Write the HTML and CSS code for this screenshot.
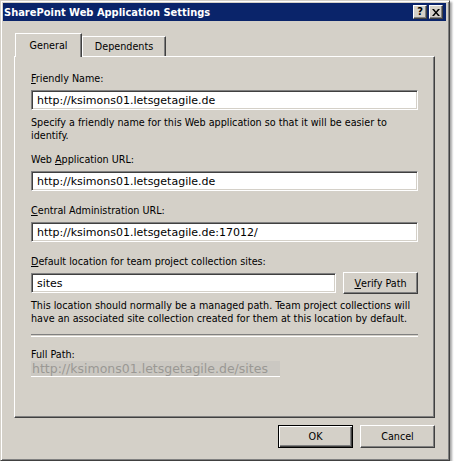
FILE: index.html
```html
<!DOCTYPE html>
<html>
<head>
<meta charset="utf-8">
<link rel="stylesheet" href="styles.css">
</head>
<body>
<div class="window">
  <div class="titlebar">
    <span class="title">SharePoint Web Application Settings</span>
    <div class="tbtns">
      <span class="tbtn">?</span>
      <span class="tbtn x">
        <svg width="8" height="7" viewBox="0 0 8 7"><path d="M0 0h2l2 2.5L6 0h2L5 3.5 8 7H6L4 4.5 2 7H0l3-3.5z" fill="#000"/></svg>
      </span>
    </div>
  </div>
  <div class="body">
    <div class="tabs">
      <div class="tab active">General</div>
      <div class="tab">Dependents</div>
    </div>
    <div class="panel">
      <div class="label"><u>F</u>riendly Name:</div>
      <div class="input">http://ksimons01.letsgetagile.de</div>
      <div class="help">Specify a friendly name for this Web application so that it will be easier to identify.</div>
      <div class="label">Web <u>A</u>pplication URL:</div>
      <div class="input">http://ksimons01.letsgetagile.de</div>
      <div class="label"><u>C</u>entral Administration URL:</div>
      <div class="input">http://ksimons01.letsgetagile.de:17012/</div>
      <div class="label"><u>D</u>efault location for team project collection sites:</div>
      <div class="row">
        <div class="input grow">sites</div>
        <div class="button verify"><u>V</u>erify Path</div>
      </div>
      <div class="help">This location should normally be a managed path. Team project collections will have an associated site collection created for them at this location by default.</div>
      <div class="sep"></div>
      <div class="label full">Full Path:</div>
      <div class="fullpath">http://ksimons01.letsgetagile.de/sites</div>
    </div>
    <div class="footer">
      <div class="button default">OK</div>
      <div class="button">Cancel</div>
    </div>
  </div>
</div>
</body>
</html>
```
FILE: styles.css
```css
html, body {
  margin: 0;
  padding: 0;
  background: #fff;
}
body {
  font-family: "DejaVu Sans Condensed", "DejaVu Sans", sans-serif;
  font-size: 10.7px;
  color: #000;
}
.window {
  width: 450px;
  height: 461px;
  box-sizing: border-box;
  background: #d4d0c8;
  border-top: 1px solid #d4d0c8;
  border-left: 1px solid #d4d0c8;
  border-right: 1px solid #404040;
  border-bottom: 1px solid #404040;
  box-shadow: inset 1px 1px #fff, inset -1px -1px #808080, 2px 2px 2px rgba(0,0,0,0.35);
  padding: 2px 3px 3px 2px;
  display: flex;
  flex-direction: column;
}
.titlebar {
  height: 18px;
  background: #0a246a;
  display: flex;
  align-items: center;
  justify-content: space-between;
  padding: 0 3px 0 1px;
}
.title {
  color: #fff;
  font-weight: bold;
  font-size: 11px;
}
.tbtns {
  display: flex;
  gap: 2px;
}
.tbtn {
  width: 14px;
  height: 14px;
  box-sizing: border-box;
  background: #d4d0c8;
  border-top: 1px solid #fff;
  border-left: 1px solid #fff;
  border-right: 1px solid #404040;
  border-bottom: 1px solid #404040;
  box-shadow: inset -1px -1px #808080;
  font-weight: bold;
  font-size: 11px;
  line-height: 12px;
  text-align: center;
  display: flex;
  align-items: center;
  justify-content: center;
}
.tbtn.x svg { display: block; }
.body {
  flex: 1;
  padding: 12px 11px 0 11px;
  display: flex;
  flex-direction: column;
}
.tabs {
  display: flex;
  height: 23px;
  align-items: flex-end;
  padding-left: 1px;
  position: relative;
  z-index: 1;
}
.tab {
  box-sizing: border-box;
  height: 20px;
  padding: 3px 0 0 0;
  text-align: center;
  border-top: 1px solid #fff;
  border-left: 1px solid #fff;
  border-right: 1px solid #404040;
  box-shadow: inset -1px 0 #808080;
  width: 84px;
}
.tab.active {
  width: 67px;
  height: 24px;
  padding-top: 5px;
  margin-bottom: -1px;
  background: #d4d0c8;
}
.panel {
  height: 362px;
  box-sizing: border-box;
  border-top: 1px solid #fff;
  border-left: 1px solid #fff;
  border-right: 1px solid #404040;
  border-bottom: 1px solid #404040;
  box-shadow: inset -1px -1px #808080;
  padding: 15px 16px 0 16px;
  display: flex;
  flex-direction: column;
}
.label {
  line-height: 13px;
  height: 13px;
  margin-bottom: 5px;
}
.label.full { margin-bottom: 0; }
.input {
  height: 20px;
  box-sizing: border-box;
  background: #fff;
  border-top: 1px solid #808080;
  border-left: 1px solid #808080;
  border-right: 1px solid #fff;
  border-bottom: 1px solid #fff;
  box-shadow: inset 1px 1px #404040, inset -1px -1px #d4d0c8;
  padding: 3px 0 0 5px;
  line-height: 14px;
  font-family: "DejaVu Sans", sans-serif;
  font-size: 11px;
  margin-bottom: 13px;
}
.help {
  line-height: 13px;
  margin: -7px 0 11px 0;
}
.row {
  display: flex;
  gap: 7px;
  margin-bottom: 3px;
  align-items: flex-start;
}
.row .input { margin-bottom: 0; }
.grow { flex: 1; }
.button {
  box-sizing: border-box;
  width: 75px;
  height: 23px;
  background: #d4d0c8;
  border-top: 1px solid #fff;
  border-left: 1px solid #fff;
  border-right: 1px solid #404040;
  border-bottom: 1px solid #404040;
  box-shadow: inset -1px -1px #808080;
  display: flex;
  align-items: center;
  justify-content: center;
}
.verify {
  width: 75px;
  height: 22px;
  margin-top: -1px;
}
.row + .help { margin-top: 2px; margin-bottom: 12px; }
.sep {
  height: 1px;
  border-top: 1px solid #808080;
  border-bottom: 1px solid #fff;
  margin: -3px 0 11px 0;
}
.fullpath {
  width: 249px;
  height: 16px;
  box-sizing: border-box;
  background: #cbc8c2;
  border-bottom: 1px solid #fff;
  color: #9a9894;
  font-family: "DejaVu Sans", sans-serif;
  font-size: 12.5px;
  line-height: 15px;
  padding-left: 1px;
  white-space: nowrap;
  overflow: hidden;
}
.footer {
  display: flex;
  justify-content: flex-end;
  gap: 7px;
  padding-top: 7px;
}
.button.default {
  border: 1px solid #000;
  box-shadow: inset 1px 1px #fff, inset -1px -1px #404040, inset -2px -2px #808080;
}
```
